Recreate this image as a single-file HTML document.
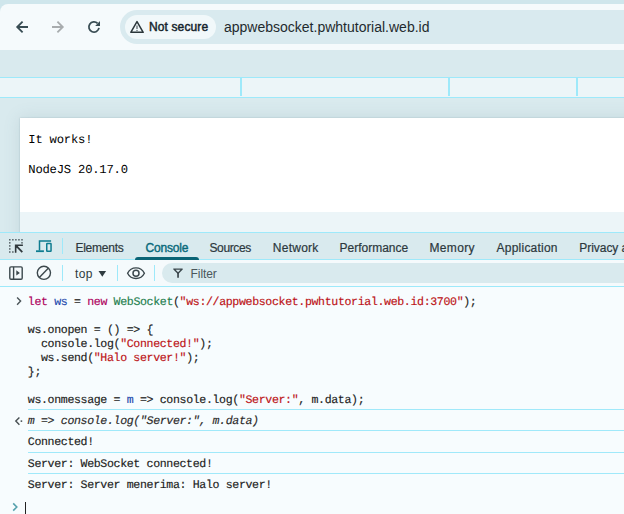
<!DOCTYPE html>
<html>
<head>
<meta charset="utf-8">
<title>appwebsocket.pwhtutorial.web.id</title>
<style>
html,body{margin:0;padding:0;}
body{width:624px;height:514px;overflow:hidden;position:relative;background:#d9eaee;font-family:"Liberation Sans",sans-serif;}
.abs{position:absolute;}
.t{position:absolute;white-space:pre;line-height:1;}
/* browser chrome */
#tabstrip{left:0;top:0;width:624px;height:14px;background:#cfe6ec;}
#toolbar{left:0;top:4px;width:624px;height:46px;background:#f5fafc;border-top-left-radius:8px;}
#omni{left:120px;top:10px;width:520px;height:34px;background:#d9eaef;border-radius:17px;}
#chip{left:125px;top:15px;width:91px;height:24px;background:#f1f8fa;border-radius:12px;}
#notsecure{left:149px;top:21px;font-size:12px;font-weight:normal;color:#15242c;-webkit-text-stroke:0.45px #15242c;letter-spacing:0.12px;}
#url{left:224px;top:20px;font-size:14px;color:#1f2a2e;}
/* bookmark-ish strip */
#strip{left:0;top:77px;width:624px;height:19px;background:#ecf5f8;border-top:1px solid #9ee9fa;border-bottom:1px solid #9ee9fa;}
.vd{position:absolute;top:78px;width:2px;height:18px;background:#9ee9fa;}
#grad{left:0;top:98px;width:624px;height:20px;background:linear-gradient(#d9eaee,#d4e5e8);}
/* page */
#pshadow{left:20px;top:118px;width:640px;height:200px;background:#fff;box-shadow:0 0 16px rgba(80,115,125,.15),0 0 1.5px rgba(80,115,125,.32);}
#page{left:20px;top:118px;width:604px;height:94px;background:#fff;}
#below{left:20px;top:212px;width:604px;height:20px;background:#ecf5f8;}
.pre{font-family:"Liberation Mono",monospace;font-size:12.2px;color:#000;letter-spacing:-0.21px;text-rendering:geometricPrecision;}
/* devtools */
#dt-top{left:0;top:232px;width:624px;height:1px;background:#9ee9fa;}
#tabs{left:0;top:233px;width:624px;height:26px;background:#d9eaee;}
#dt-l2{left:0;top:259px;width:624px;height:1px;background:#9ee9fa;}
#ctb{left:0;top:260px;width:624px;height:26px;background:#f5fafc;}
#dt-l3{left:0;top:286px;width:624px;height:1px;background:#9ee9fa;}
#console{left:0;top:287px;width:624px;height:227px;background:#f7fcfe;}
.tab{font-size:12px;color:#2c383d;top:242px;-webkit-text-stroke:0.2px #2c383d;}
.tab.sel{color:#08697a;-webkit-text-stroke:0.4px #08697a;}
#underline{left:135px;top:257px;width:64px;height:3px;background:#0a6475;border-radius:3px 3px 0 0;}
.sep{position:absolute;width:1px;background:#9ee9fa;}
#filter{left:162px;top:263px;width:480px;height:20px;background:#d9eaee;border-radius:10px;}
.code{font-family:"Liberation Mono",monospace;font-size:11.6px;letter-spacing:-0.361px;text-rendering:geometricPrecision;color:#1c1c1c;-webkit-text-stroke:0.15px;}
.kw{color:#ae005c;}
.var{color:#1c48ad;}
.cls{color:#25804f;}
.str{color:#bc1216;}
.hl{position:absolute;left:28px;width:596px;height:1px;background:#a0e9fa;}
</style>
</head>
<body>
<div id="tabstrip" class="abs"></div>
<div id="toolbar" class="abs"></div>
<div id="omni" class="abs"></div>
<div id="chip" class="abs"></div>

<!-- nav icons -->
<svg class="abs" style="left:0;top:4px" width="120" height="46" viewBox="0 0 120 46">
  <g fill="none" stroke="#384c53" stroke-width="1.8" stroke-linecap="butt" stroke-linejoin="miter">
    <path d="M28 23H17.6M22.6 17.6L17.2 23l5.4 5.4"/>
  </g>
  <g fill="none" stroke="#a8acae" stroke-width="1.8">
    <path d="M52 23h10.4M57.4 17.6l5.4 5.4-5.4 5.4"/>
  </g>
  <g fill="none" stroke="#384c53" stroke-width="1.8">
    <path d="M97.6 19.4A5.1 5.1 0 1 0 99 23.9"/>
    <path d="M95.2 21.9H100V17.1z" fill="#384c53" stroke="none"/>
  </g>
</svg>
<!-- warning triangle -->
<svg class="abs" style="left:129px;top:20px" width="16" height="14" viewBox="0 0 16 14">
  <path d="M8 1.600L14.200 12.300H1.800Z" fill="none" stroke="#2b363a" stroke-width="1.500" stroke-linejoin="round"/>
  <path d="M8 5.4v3.600" stroke="#566064" stroke-width="1.2"/>
  <circle cx="8" cy="10.500" r=".7" fill="#566064"/>
</svg>
<div id="notsecure" class="t">Not secure</div>
<div id="url" class="t">appwebsocket.pwhtutorial.web.id</div>


<div id="pshadow" class="abs"></div>
<div id="page" class="abs"></div>
<div id="cover" class="abs" style="left:0;top:50px;width:624px;height:27px;background:#d9eaee"></div>
<div id="strip" class="abs"></div>
<div class="vd" style="left:240px"></div>
<div class="vd" style="left:448px"></div>
<div class="vd" style="left:576px"></div>
<div id="below" class="abs"></div>
<div class="t pre" style="left:28.3px;top:134px;">It works!</div>
<div class="t pre" style="left:28.3px;top:164px;">NodeJS 20.17.0</div>

<!-- devtools -->
<div id="dt-top" class="abs"></div>
<div id="tabs" class="abs"></div>
<div id="dt-l2" class="abs"></div>
<div id="ctb" class="abs"></div>
<div id="dt-l3" class="abs"></div>
<div id="console" class="abs"></div>

<!-- devtools icons row 1 -->
<svg class="abs" style="left:0;top:233px" width="70" height="26" viewBox="0 0 70 26">
  <g fill="#3b474c" stroke="none"><rect x="9.10" y="6.10" width="1.4" height="1.4"/><rect x="12.15" y="6.10" width="1.4" height="1.4"/><rect x="15.20" y="6.10" width="1.4" height="1.4"/><rect x="18.25" y="6.10" width="1.4" height="1.4"/><rect x="21.30" y="6.10" width="1.4" height="1.4"/><rect x="9.10" y="9.15" width="1.4" height="1.4"/><rect x="9.10" y="12.20" width="1.4" height="1.4"/><rect x="9.10" y="15.25" width="1.4" height="1.4"/><rect x="9.10" y="18.30" width="1.4" height="1.4"/><rect x="12.15" y="18.30" width="1.4" height="1.4"/><rect x="21.30" y="9.15" width="1.4" height="1.4"/></g>
  <g fill="none" stroke="#30393d" stroke-width="1.6">
    <path d="M15.65 19.75V12.25H22.9"/>
    <path d="M16 12.6l6.3 6.6" stroke-width="1.8"/>
    <path d="M15.65 12.25h3.4l-3.4 3.4z" fill="#30393d" stroke="none"/>
  </g>
  <g fill="none" stroke="#0e7c90" stroke-width="1.5">
    <path d="M39.5 17.6V8H51.1"/>
    <rect x="46.75" y="10.6" width="4.3" height="7.75" rx=".5"/>
  </g>
  <rect x="36" y="17.3" width="7.9" height="1.8" fill="#0e7c90"/>
</svg>
<div class="sep" style="left:62px;top:238px;height:16px"></div>

<div class="t tab" style="left:75.4px;letter-spacing:-0.22px">Elements</div>
<div class="t tab sel" style="left:145.4px;letter-spacing:-0.17px">Console</div>
<div class="t tab" style="left:209.5px;letter-spacing:-0.38px">Sources</div>
<div class="t tab" style="left:272.8px;letter-spacing:0.25px">Network</div>
<div class="t tab" style="left:339.5px;letter-spacing:0.0px">Performance</div>
<div class="t tab" style="left:429.5px;letter-spacing:0.33px">Memory</div>
<div class="t tab" style="left:496.6px;letter-spacing:0.22px">Application</div>
<div class="t tab" style="left:579.3px;letter-spacing:-0.05px">Privacy and security</div>
<div id="underline" class="abs"></div>

<!-- console toolbar -->
<svg class="abs" style="left:0;top:260px" width="70" height="26" viewBox="0 0 70 26">
  <g fill="none" stroke="#3b474c" stroke-width="1.4">
    <rect x="9.8" y="6.9" width="12.4" height="12.4" rx="1.2"/>
    <path d="M13.6 6.9v12.4"/>
    <path d="M16.3 10.3l3.6 2.6-3.600 2.600z" fill="#3b474c" stroke="none"/>
    <circle cx="43.9" cy="12.8" r="6.6"/>
    <path d="M39.3 17.5l9.2-9.4"/>
  </g>
</svg>
<div class="sep" style="left:62px;top:265px;height:16px"></div>
<div class="t" style="left:75px;top:268px;font-size:12px;color:#2f3b40;letter-spacing:0.4px">top</div>
<svg class="abs" style="left:98px;top:270px" width="9" height="8" viewBox="0 0 9 8"><path d="M.5 1h7.6L4.3 6.8z" fill="#2f3b40"/></svg>
<div class="sep" style="left:117px;top:265px;height:16px"></div>
<svg class="abs" style="left:126px;top:266px" width="20" height="14" viewBox="0 0 20 14">
  <path d="M1.6 7.2C3.4 3.6 6.4 1.9 10 1.9s6.6 1.700 8.400 5.300C16.600 10.800 13.600 12.500 10 12.500S3.400 10.800 1.600 7.200z" fill="none" stroke="#3b474c" stroke-width="1.4"/>
  <circle cx="10" cy="7.2" r="3" fill="none" stroke="#3b474c" stroke-width="1.5"/>
</svg>
<div class="sep" style="left:154px;top:265px;height:16px"></div>
<div id="filter" class="abs"></div>
<svg class="abs" style="left:172px;top:267px" width="14" height="13" viewBox="0 0 14 13">
  <path d="M1.9 2.1H10.200L6.050 6.200z" fill="none" stroke="#3b474c" stroke-width="1.400" stroke-linejoin="round"/>
  <path d="M6.050 5.600V10.800" stroke="#3b474c" stroke-width="1.700"/>
</svg>
<div class="t" style="left:190.600px;top:268px;font-size:12px;color:#4a575c;letter-spacing:-0.1px">Filter</div>

<!-- console body -->
<svg class="abs" style="left:15px;top:296px" width="9" height="10" viewBox="0 0 9 10"><path d="M2.1 1.500l3.500 3.600L2.1 8.700" fill="none" stroke="#4a5458" stroke-width="1.400"/></svg>
<div class="t code" style="left:27.8px;top:297px"><span class="kw">let</span> <span class="var">ws</span> = <span class="kw">new</span> <span class="cls">WebSocket</span>(<span class="str">"ws://appwebsocket.pwhtutorial.web.id:3700"</span>);</div>
<div class="t code" style="left:27.8px;top:325px">ws.onopen = () => {</div>
<div class="t code" style="left:27.8px;top:339px">  console.log(<span class="str">"Connected!"</span>);</div>
<div class="t code" style="left:27.8px;top:353px">  ws.send(<span class="str">"Halo server!"</span>);</div>
<div class="t code" style="left:27.8px;top:367px">};</div>
<div class="t code" style="left:27.8px;top:395px">ws.onmessage = <span class="var">m</span> => console.log(<span class="str">"Server:"</span>, m.data);</div>
<div class="hl" style="top:409px"></div>
<svg class="abs" style="left:14px;top:416px" width="10" height="10" viewBox="0 0 10 10"><path d="M5.400 1.500L1.800 5.100l3.600 3.600" fill="none" stroke="#474f52" stroke-width="1.400"/><circle cx="7.400" cy="5.100" r=".95" fill="#474f52"/></svg>
<div class="t code" style="left:27.8px;top:416px;font-style:italic;color:#2a2a2a">m => console.log("Server:", m.data)</div>
<div class="hl" style="top:430px"></div>
<div class="t code" style="left:27.8px;top:437px">Connected!</div>
<div class="hl" style="top:452px"></div>
<div class="t code" style="left:27.8px;top:459px">Server: WebSocket connected!</div>
<div class="hl" style="top:473px"></div>
<div class="t code" style="left:27.8px;top:480px">Server: Server menerima: Halo server!</div>
<svg class="abs" style="left:12px;top:502px" width="8" height="10" viewBox="0 0 8 10"><path d="M1.200 1.400l3.600 3.600-3.600 3.600" fill="none" stroke="#55a1ad" stroke-width="1.600"/></svg>
<div class="abs" style="left:25px;top:502px;width:1px;height:12px;background:#222"></div>
</body>
</html>
